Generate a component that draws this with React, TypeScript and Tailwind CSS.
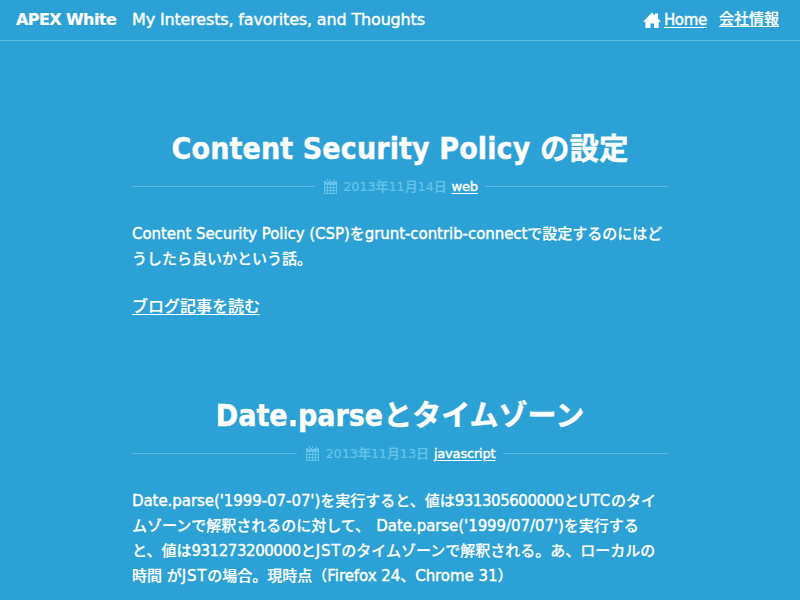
import type { ReactNode } from 'react';

function HomeIcon() {
  return (
    <svg width="18" height="16" viewBox="0 0 18 16" fill="currentColor" className="mr-[3px] block shrink-0">
      <path d="M9 .5 12 3.5V1.500h3v5l3 3.200h-2.300V16H11v-4.500H7.500V16H2.400V9.700H0z" />
    </svg>
  );
}

function CalendarIcon() {
  return (
    <svg width="13" height="15" viewBox="0 0 13 15" fill="currentColor" className="block shrink-0" shapeRendering="crispEdges">
      <path d="M0 2h2v1h2V2h2v1h2V2h2v1h1V2h2v13H0zM1 6v2h2V6zm3 0v2h2V6zm3 0v2h2V6zm3 0v2h2V6zM1 9v2h2V9zm3 0v2h2V9zm3 0v2h2V9zm3 0v2h2V9zM1 12v2h2v-2zm3 0v2h2v-2zm3 0v2h2v-2zm3 0v2h2v-2z" fillRule="evenodd" />
      <path d="M3 0h1v2H3zM6 0h1v2H6zM10 0h1v2h-1z" />
    </svg>
  );
}

function Line({ children }: { children: ReactNode }) {
  return <span className="block h-[25px] whitespace-nowrap">{children}</span>;
}

function Digits({ children }: { children: ReactNode }) {
  return <span className="tracking-[-0.44px] [-webkit-text-stroke:0.4px]">{children}</span>;
}

function Code({ children }: { children: ReactNode }) {
  return <span className="tracking-[-0.06px] [-webkit-text-stroke:0.4px]">{children}</span>;
}

function Acronym({ children }: { children: ReactNode }) {
  return <span className="tracking-[0.8px] [-webkit-text-stroke:0.4px]">{children}</span>;
}

function Meta({ date, tag }: { date: string; tag: string }) {
  return (
    <div className="flex h-5 items-center text-[13px] leading-5">
      <div className="h-px flex-1 bg-[#61b9e1]" />
      <div className="flex items-center pr-[7px] pl-[9px] whitespace-nowrap">
        <span className="text-[#64c4eb]"><CalendarIcon /></span>
        <span className="ml-[6px] pt-px tracking-[-0.16px] text-[#64c4eb]">{date}</span>
        <a className="ml-[5px] pt-px tracking-[-0.18px] underline underline-offset-2 [-webkit-text-stroke:0.4px]">{tag}</a>
      </div>
      <div className="h-px flex-1 bg-[#61b9e1]" />
    </div>
  );
}

function Title({ children }: { children: ReactNode }) {
  return (
    <h2 className="h-[53px] text-center font-['DejaVu_Sans_Condensed','Noto_Sans_CJK_JP',sans-serif] text-[30px] leading-[52px] font-bold whitespace-nowrap [-webkit-text-stroke:0.4px]">
      {children}
    </h2>
  );
}

export default function App() {
  return (
    <div className="h-[600px] w-[800px] overflow-hidden bg-[#2ca1d6] font-['DejaVu_Sans','Noto_Sans_CJK_JP',sans-serif] text-[15px] leading-[25px] font-medium text-white [-webkit-text-stroke:0.2px]">
      <header className="flex h-[41px] items-center border-b border-[#61b9e1] pr-[21px] pl-4 whitespace-nowrap">
        <span className="w-[116px] text-base font-bold tracking-[-0.58px]">APEX White</span>
        <span className="flex-1 text-base tracking-[-0.16px] [-webkit-text-stroke:0.4px]">My Interests, favorites, and Thoughts</span>
        <HomeIcon />
        <a className="tracking-[-0.3px] underline underline-offset-2 [-webkit-text-stroke:0.4px]">Home</a>
        <a className="ml-3 pb-[2px] underline underline-offset-2">会社情報</a>
      </header>
      <main className="mx-auto w-[536px]">
        <article className="pt-[82px]">
          <Title><span className="tracking-[0.12px]">Content Security Policy </span><span className="text-[29.5px]">の設定</span></Title>
          <Meta date="2013年11月14日" tag="web" />
          <p className="mt-[26px]">
            <Line><Code>Content Security Policy (CSP)</Code>を<Code>grunt-contrib-connect</Code>で設定するのにはど</Line>
            <Line>うしたら良いかという話。</Line>
          </p>
          <p className="mt-[22px] text-base leading-[25px]"><a className="underline underline-offset-2">ブログ記事を読む</a></p>
        </article>
        <article className="pt-[71px]">
          <Title>Date.parse<span className="text-[29px]">とタイムゾーン</span></Title>
          <Meta date="2013年11月13日" tag="javascript" />
          <p className="mt-[26px]">
            <Line><Code>Date.parse('1999-07-07')</Code>を実行すると、値は<Digits>931305600000</Digits>と<Acronym>UTC</Acronym>のタイ</Line>
            <Line>ムゾーンで解釈されるのに対して、<span className="tracking-[1.5px]"> </span><Code>Date.parse('1999/07/07')</Code>を実行する</Line>
            <Line>と、値は<Digits>931273200000</Digits>と<Acronym>JST</Acronym>のタイムゾーンで解釈される。あ、ローカルの</Line>
            <Line>時間 が<Acronym>JST</Acronym>の場合。現時点（<Code>Firefox 24</Code>、<Code>Chrome 31</Code>）</Line>
          </p>
        </article>
      </main>
    </div>
  );
}
